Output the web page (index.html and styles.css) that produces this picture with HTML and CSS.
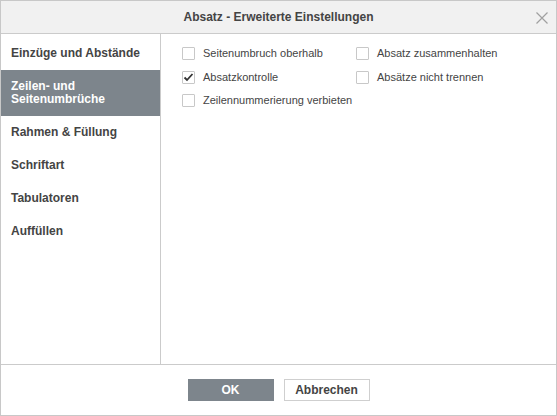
FILE: index.html
```html
<!DOCTYPE html>
<html>
<head>
<meta charset="utf-8">
<link rel="stylesheet" href="styles.css">
</head>
<body>
<div class="dialog">
  <div class="header">
    <span class="title">Absatz - Erweiterte Einstellungen</span>
    <svg class="close" width="12" height="12" viewBox="0 0 12 12"><path d="M0.5 0.5 L11.5 11.5 M11.5 0.5 L0.5 11.5" stroke="#a0a0a0" stroke-width="1.2" fill="none"/></svg>
  </div>
  <div class="body">
    <ul class="menu">
      <li class="item">Einzüge und Abstände</li>
      <li class="item active">Zeilen- und<br>Seitenumbrüche</li>
      <li class="item">Rahmen &amp; Füllung</li>
      <li class="item">Schriftart</li>
      <li class="item">Tabulatoren</li>
      <li class="item">Auffüllen</li>
    </ul>
    <div class="content">
      <div class="grid">
        <label class="cb"><span class="box"></span>Seitenumbruch oberhalb</label>
        <label class="cb"><span class="box"></span>Absatz zusammenhalten</label>
        <label class="cb"><span class="box"><svg width="11" height="11" viewBox="0 0 11 11"><path d="M1.5 5.5 L4 8 L9.5 2" stroke="#333" stroke-width="1.8" fill="none"/></svg></span>Absatzkontrolle</label>
        <label class="cb"><span class="box"></span>Absätze nicht trennen</label>
        <label class="cb"><span class="box"></span>Zeilennummerierung verbieten</label>
      </div>
    </div>
  </div>
  <div class="footer">
    <button class="btn primary">OK</button>
    <button class="btn">Abbrechen</button>
  </div>
</div>
</body>
</html>
```
FILE: styles.css
```css
html, body {
  margin: 0;
  padding: 0;
  background: #fff;
}
.dialog {
  width: 557px;
  height: 416px;
  box-sizing: border-box;
  border: 1px solid #c8c8c8;
  display: flex;
  flex-direction: column;
  font-family: "Liberation Sans", Arial, sans-serif;
  color: #444;
}
.header {
  height: 32px;
  flex: none;
  background: #f1f1f1;
  border-bottom: 1px solid #cbcbcb;
  display: flex;
  align-items: center;
  justify-content: center;
  position: relative;
}
.title {
  font-size: 12px;
  font-weight: bold;
  color: #444;
}
.close {
  position: absolute;
  right: 8px;
  top: 11px;
}
.body {
  flex: 1;
  display: flex;
  border-bottom: 1px solid #cbcbcb;
}
.menu {
  list-style: none;
  margin: 0;
  padding: 3px 0 0 0;
  width: 159px;
  border-right: 1px solid #cbcbcb;
}
.item {
  padding: 10px 10px;
  font-size: 12px;
  font-weight: bold;
  line-height: 13px;
  color: #444;
}
.item.active {
  background: #7d858c;
  color: #fff;
}
.content {
  flex: 1;
  padding: 13px 0 0 21px;
}
.grid {
  display: grid;
  grid-template-columns: 174px auto;
  row-gap: 10.5px;
}
.cb {
  display: flex;
  align-items: center;
  font-size: 11px;
  line-height: 13px;
  color: #444;
}
.box {
  width: 11px;
  height: 11px;
  border: 1px solid #c8c8c8;
  border-radius: 1px;
  margin-right: 8px;
  display: flex;
  align-items: center;
  justify-content: center;
  flex: none;
}
.footer {
  height: 50px;
  flex: none;
  display: flex;
  justify-content: center;
  align-items: flex-start;
  gap: 10px;
  padding-top: 14px;
  box-sizing: border-box;
}
.btn {
  width: 86px;
  height: 22px;
  border: 1px solid #cfcfcf;
  background: #fff;
  font-family: "Liberation Sans", Arial, sans-serif;
  font-size: 12px;
  font-weight: bold;
  color: #444;
  padding: 0;
}
.btn.primary {
  background: #7d858c;
  border-color: #7d858c;
  color: #fff;
}
```
